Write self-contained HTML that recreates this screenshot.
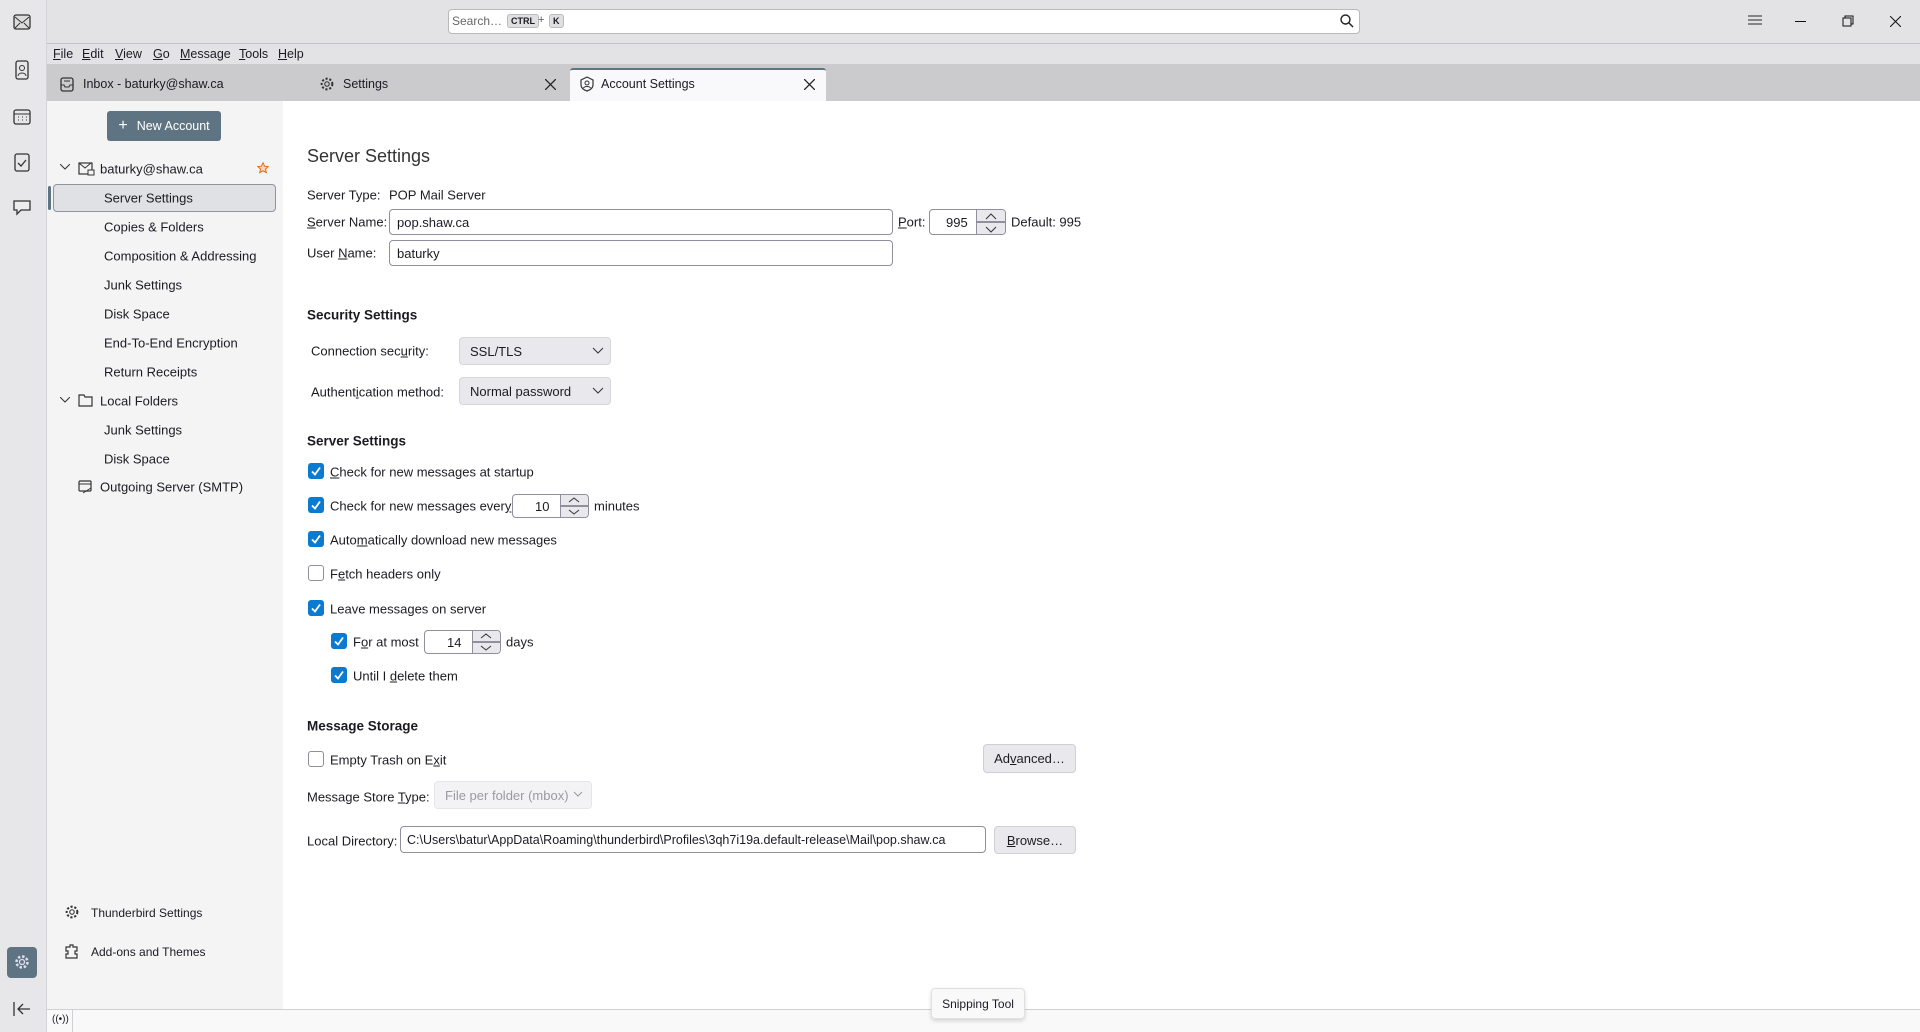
<!DOCTYPE html>
<html><head><meta charset="utf-8"><style>
*{box-sizing:border-box;margin:0;padding:0}
body{width:1920px;height:1032px;overflow:hidden;background:#fff;font-family:"Liberation Sans",sans-serif;font-size:13px;color:#1c1b22;position:relative}
.a{position:absolute;white-space:nowrap}
.inp{position:absolute;border:1px solid #8f8f9d;border-radius:4px;background:#fff;padding-left:7px;display:flex;align-items:center}
.sel{position:absolute;background:#e9e9ed;border:1px solid #d6d6da;border-radius:4px;padding-left:10px;display:flex;align-items:center}
.cb{position:absolute;width:16px;height:16px;border-radius:3px;background:#0a7bd0}
.cb.off{background:#fff;border:1px solid #8f8f9d}
.lbl{position:absolute;white-space:nowrap;transform:translateY(-50%)}
.btn{position:absolute;background:#e9e9ed;border:1px solid #cfcfd8;border-radius:4px;display:flex;align-items:center;justify-content:center}
u{text-decoration:underline}
</style></head><body>
<!-- spaces bar -->
<div class="a" style="left:0;top:0;width:47px;height:1032px;background:#e7e7ea;border-right:1px solid #d4d4d8"></div>
<!-- title bar -->
<div class="a" style="left:47px;top:0;width:1873px;height:64px;background:#e3e3e6;border-top:0"></div>
<div class="a" style="left:47px;top:43px;width:1873px;height:1px;background:#c4c4c8"></div>
<div class="a" style="left:448px;top:9px;width:912px;height:25px;background:#fff;border:1px solid #b8b8bd;border-radius:4px"></div>
<div class="a" style="left:452px;top:14px;color:#666;font-size:12px">Search…</div>
<div class="a" style="left:507px;top:14px;font-size:9px;background:#e0e0e3;border:1px solid #bbb;border-radius:3px;padding:1px 3px;font-weight:bold">CTRL</div>
<div class="a" style="left:538px;top:14px;font-size:11px;color:#555">+</div>
<div class="a" style="left:549px;top:14px;font-size:9px;background:#e0e0e3;border:1px solid #bbb;border-radius:3px;padding:1px 3px;font-weight:bold">K</div>
<svg class="a" style="left:1339px;top:13px" width="16" height="16" viewBox="0 0 16 16"><circle cx="6.5" cy="6.5" r="4.5" fill="none" stroke="#222" stroke-width="1.4"/><path d="M10 10l4 4" stroke="#222" stroke-width="1.5"/></svg>
<svg class="a" style="left:1748px;top:14px" width="14" height="12"><path d="M0 2h14M0 6h14M0 10h14" stroke="#666" stroke-width="1.5"/></svg>
<div class="a" style="left:1795px;top:21px;width:11px;height:1px;background:#111"></div>
<svg class="a" style="left:1842px;top:15px" width="12" height="12"><rect x="1" y="3" width="8" height="8" fill="none" stroke="#111"/><path d="M3 3V1h8v8H9" fill="none" stroke="#111"/></svg>
<svg class="a" style="left:1890px;top:16px" width="11" height="11"><path d="M0 0l11 11M11 0L0 11" stroke="#111"/></svg>
<!-- left icons -->
<svg class="a" style="left:13px;top:14px" width="18" height="16"><rect x="1" y="1" width="16" height="14" rx="2" fill="#ddd" stroke="#333" stroke-width="1.3"/><path d="M2 3l7 6 7-6M2 14l5-5M16 14l-5-5" stroke="#333" fill="none"/></svg>
<svg class="a" style="left:14px;top:60px" width="16" height="20"><rect x="2" y="1" width="12" height="18" rx="2" fill="none" stroke="#333" stroke-width="1.3"/><circle cx="8" cy="8" r="2.5" fill="none" stroke="#333"/><path d="M4 16c0-4 8-4 8 0" fill="none" stroke="#333"/></svg>
<svg class="a" style="left:13px;top:108px" width="18" height="17"><rect x="1" y="2" width="16" height="14" rx="2" fill="none" stroke="#333" stroke-width="1.3"/><path d="M1 6h16M5 9h1M9 9h1M13 9h1M5 12h1M9 12h1M13 12h1" stroke="#333"/></svg>
<svg class="a" style="left:14px;top:152px" width="16" height="20"><rect x="1" y="2" width="14" height="17" rx="2" fill="none" stroke="#333" stroke-width="1.3"/><path d="M4 11l3 3 5-6" fill="none" stroke="#333" stroke-width="1.3"/></svg>
<svg class="a" style="left:12px;top:199px" width="20" height="18"><path d="M2 2h16v9H9l-4 4v-4H2z" fill="#eee" stroke="#333" stroke-width="1.3"/></svg>
<div class="a" style="left:7px;top:947px;width:30px;height:31px;background:#5f7482;border-radius:4px"></div>
<svg class="a" style="left:13px;top:953px" width="18" height="18" viewBox="0 0 18 18"><circle cx="9" cy="9" r="5.5" fill="none" stroke="#dde" stroke-width="2.5" stroke-dasharray="2.5 1.8"/><circle cx="9" cy="9" r="2.5" fill="none" stroke="#dde" stroke-width="1.3"/></svg>
<svg class="a" style="left:13px;top:1002px" width="18" height="14"><path d="M1 0v14M17 7H5M10 2L5 7l5 5" stroke="#333" fill="none" stroke-width="1.3"/></svg>
<!-- menu -->
<div class="a" style="left:53px;top:47px;font-size:12.5px"><u>F</u>ile</div>
<div class="a" style="left:82px;top:47px;font-size:12.5px"><u>E</u>dit</div>
<div class="a" style="left:115px;top:47px;font-size:12.5px"><u>V</u>iew</div>
<div class="a" style="left:153px;top:47px;font-size:12.5px"><u>G</u>o</div>
<div class="a" style="left:180px;top:47px;font-size:12.5px"><u>M</u>essage</div>
<div class="a" style="left:239px;top:47px;font-size:12.5px"><u>T</u>ools</div>
<div class="a" style="left:278px;top:47px;font-size:12.5px"><u>H</u>elp</div>
<!-- tabs -->
<div class="a" style="left:47px;top:64px;width:1873px;height:37px;background:#cbcbcd"></div>
<div class="a" style="left:570px;top:68px;width:256px;height:33px;background:#f9f9fb;border-top:2px solid #5f7482;border-radius:3px 3px 0 0"></div>
<svg class="a" style="left:60px;top:77px" width="14" height="15"><rect x="1" y="1" width="12" height="13" rx="2" fill="none" stroke="#333" stroke-width="1.3"/><path d="M1 8h3l1 2h4l1-2h3M4 4h6" stroke="#333" fill="none"/></svg>
<div class="a" style="left:83px;top:77px;font-size:12.5px">Inbox - baturky@shaw.ca</div>
<svg class="a" style="left:319px;top:76px" width="16" height="16" viewBox="0 0 18 18"><circle cx="9" cy="9" r="6" fill="none" stroke="#333" stroke-width="2.3" stroke-dasharray="2.4 2"/><circle cx="9" cy="9" r="2.5" fill="none" stroke="#333" stroke-width="1.2"/></svg>
<div class="a" style="left:343px;top:77px;font-size:12.5px">Settings</div>
<svg class="a" style="left:545px;top:79px" width="11" height="11"><path d="M0 0l11 11M11 0L0 11" stroke="#222" stroke-width="1.3"/></svg>
<svg class="a" style="left:580px;top:76px" width="14" height="16"><path d="M7 1l6 3v5c0 3-3 5-6 6-3-1-6-3-6-6V4z" fill="none" stroke="#333" stroke-width="1.2"/><circle cx="7" cy="7" r="2" fill="none" stroke="#333"/><path d="M3.5 12c1-2 6-2 7 0" fill="none" stroke="#333"/></svg>
<div class="a" style="left:601px;top:77px;font-size:12.5px">Account Settings</div>
<svg class="a" style="left:804px;top:79px" width="11" height="11"><path d="M0 0l11 11M11 0L0 11" stroke="#222" stroke-width="1.3"/></svg>
<!-- sidebar -->
<div class="a" style="left:47px;top:101px;width:236px;height:909px;background:#f4f4f5"></div>
<div class="a" style="left:107px;top:111px;width:114px;height:30px;background:#5f7482;border-radius:3px;color:#fff;display:flex;align-items:center;justify-content:center;font-size:12.5px"><span style="font-size:16px;margin-right:9px">+</span>New Account</div>
<svg class="a" style="left:60px;top:164px" width="10" height="7"><path d="M0 0l5 5 5-5" stroke="#333" fill="none"/></svg>
<svg class="a" style="left:78px;top:162px" width="17" height="14"><rect x="1" y="1" width="13" height="11" fill="none" stroke="#333" stroke-width="1.2"/><path d="M1 1l6 5 6-5" stroke="#333" fill="none"/><rect x="10" y="8" width="6" height="5" fill="#f4f4f5" stroke="#333"/></svg>
<div class="lbl" style="left:100px;top:169px">baturky@shaw.ca</div>
<svg class="a" style="left:257px;top:162px" width="12" height="12" viewBox="0 0 12 12"><path d="M6 .8l1.6 3.4 3.6.4-2.7 2.4.8 3.6L6 8.8 2.7 10.6l.8-3.6L.8 4.6l3.6-.4z" fill="#fbd4b4" stroke="#e66a18"/></svg>
<div class="a" style="left:48px;top:186px;width:3px;height:24px;background:#5f7482;border-radius:2px"></div>
<div class="a" style="left:53px;top:184px;width:223px;height:28px;background:#e0e1e5;border:1px solid #8e959c;border-radius:4px"></div>
<div class="lbl" style="left:104px;top:198px">Server Settings</div>
<div class="lbl" style="left:104px;top:227px">Copies &amp; Folders</div>
<div class="lbl" style="left:104px;top:256px">Composition &amp; Addressing</div>
<div class="lbl" style="left:104px;top:285px">Junk Settings</div>
<div class="lbl" style="left:104px;top:314px">Disk Space</div>
<div class="lbl" style="left:104px;top:343px">End-To-End Encryption</div>
<div class="lbl" style="left:104px;top:372px">Return Receipts</div>
<svg class="a" style="left:60px;top:397px" width="10" height="7"><path d="M0 0l5 5 5-5" stroke="#333" fill="none"/></svg>
<svg class="a" style="left:78px;top:394px" width="15" height="13"><path d="M1 1h5l1 2h7v9H1z" fill="none" stroke="#333" stroke-width="1.2"/></svg>
<div class="lbl" style="left:100px;top:401px">Local Folders</div>
<div class="lbl" style="left:104px;top:430px">Junk Settings</div>
<div class="lbl" style="left:104px;top:459px">Disk Space</div>
<svg class="a" style="left:78px;top:480px" width="15" height="14"><rect x="1" y="1" width="12" height="10" rx="1" fill="none" stroke="#333" stroke-width="1.2"/><path d="M1 4h12M5 13l8-5" stroke="#333"/></svg>
<div class="lbl" style="left:100px;top:487px">Outgoing Server (SMTP)</div>
<svg class="a" style="left:64px;top:904px" width="16" height="16" viewBox="0 0 18 18"><circle cx="9" cy="9" r="6" fill="none" stroke="#333" stroke-width="2.3" stroke-dasharray="2.4 2"/><circle cx="9" cy="9" r="2.5" fill="none" stroke="#333" stroke-width="1.2"/></svg>
<div class="lbl" style="left:91px;top:913px;font-size:12px">Thunderbird Settings</div>
<svg class="a" style="left:64px;top:943px" width="16" height="16"><path d="M2 4h4V2h3v2h4v4h-2v3h2v4H2v-4h2V8H2z" fill="none" stroke="#333" stroke-width="1.2"/></svg>
<div class="lbl" style="left:91px;top:952px;font-size:12px">Add-ons and Themes</div>
<!-- status bar -->
<div class="a" style="left:47px;top:1009px;width:1873px;height:23px;background:#f9f9fa;border-top:1px solid #d0d0d4"></div>
<div class="a" style="left:72px;top:1010px;width:1px;height:22px;background:#d0d0d4"></div>
<div class="a" style="left:52px;top:1014px;font-size:10px">((•))</div>
<!-- content -->
<div class="a" style="left:307px;top:146px;font-size:18px;color:#333">Server Settings</div>
<div class="lbl" style="left:307px;top:195px">Server Type:</div>
<div class="lbl" style="left:389px;top:195px">POP Mail Server</div>
<div class="lbl" style="left:307px;top:222px"><u>S</u>erver Name:</div>
<div class="inp" style="left:389px;top:209px;width:504px;height:26px">pop.shaw.ca</div>
<div class="lbl" style="left:898px;top:222px"><u>P</u>ort:</div>
<div class="inp" style="left:929px;top:209px;width:77px;height:26px;padding-left:16px">995</div>
<div class="a" style="left:976px;top:210px;width:29px;height:24px;background:#e9e9ed;border-left:1px solid #8f8f9d;border-radius:0 3px 3px 0"></div>
<div class="a" style="left:977px;top:221px;width:28px;height:2px;background:#8f8f9d"></div>
<svg class="a" style="left:985px;top:213px" width="12" height="20"><path d="M1 6l5-5 5 5M1 14l5 5 5-5" stroke="#333" fill="none"/></svg>
<div class="lbl" style="left:1011px;top:222px">Default: 995</div>
<div class="lbl" style="left:307px;top:253px">User <u>N</u>ame:</div>
<div class="inp" style="left:389px;top:240px;width:504px;height:26px">baturky</div>
<div class="lbl" style="left:307px;top:315px;font-weight:bold;font-size:13.5px">Security Settings</div>
<div class="lbl" style="left:311px;top:351px">Connection sec<u>u</u>rity:</div>
<div class="sel" style="left:459px;top:337px;width:152px;height:28px">SSL/TLS</div>
<svg class="a" style="left:592px;top:347px" width="12" height="8"><path d="M1 1l5 5 5-5" stroke="#333" fill="none"/></svg>
<div class="lbl" style="left:311px;top:392px">Authent<u>i</u>cation method:</div>
<div class="sel" style="left:459px;top:377px;width:152px;height:28px">Normal password</div>
<svg class="a" style="left:592px;top:387px" width="12" height="8"><path d="M1 1l5 5 5-5" stroke="#333" fill="none"/></svg>
<div class="lbl" style="left:307px;top:441px;font-weight:bold;font-size:13.5px">Server Settings</div>
<!-- checkboxes -->
<svg width="0" height="0" style="position:absolute"><defs></defs></svg>
<div class="cb" style="left:308px;top:463px"></div><svg class="a" style="left:308px;top:463px" width="16" height="16"><path d="M4 8.5l3 3 5-7" stroke="#fff" stroke-width="1.8" fill="none"/></svg>
<div class="lbl" style="left:330px;top:472px"><u>C</u>heck for new messages at startup</div>
<div class="cb" style="left:308px;top:497px"></div><svg class="a" style="left:308px;top:497px" width="16" height="16"><path d="M4 8.5l3 3 5-7" stroke="#fff" stroke-width="1.8" fill="none"/></svg>
<div class="lbl" style="left:330px;top:506px">Check for new messages ever<u>y</u></div>
<div class="inp" style="left:512px;top:494px;width:77px;height:24px;padding-left:22px">10</div>
<div class="a" style="left:560px;top:495px;width:28px;height:22px;background:#e9e9ed;border-left:1px solid #8f8f9d;border-radius:0 3px 3px 0"></div>
<div class="a" style="left:561px;top:505px;width:27px;height:2px;background:#8f8f9d"></div>
<svg class="a" style="left:568px;top:497px" width="12" height="18"><path d="M1 5l5-4 5 4M1 13l5 4 5-4" stroke="#333" fill="none"/></svg>
<div class="lbl" style="left:594px;top:506px">minutes</div>
<div class="cb" style="left:308px;top:531px"></div><svg class="a" style="left:308px;top:531px" width="16" height="16"><path d="M4 8.5l3 3 5-7" stroke="#fff" stroke-width="1.8" fill="none"/></svg>
<div class="lbl" style="left:330px;top:540px">Auto<u>m</u>atically download new messages</div>
<div class="cb off" style="left:308px;top:565px"></div>
<div class="lbl" style="left:330px;top:574px">F<u>e</u>tch headers only</div>
<div class="cb" style="left:308px;top:600px"></div><svg class="a" style="left:308px;top:600px" width="16" height="16"><path d="M4 8.5l3 3 5-7" stroke="#fff" stroke-width="1.8" fill="none"/></svg>
<div class="lbl" style="left:330px;top:609px">Leave messa<u>g</u>es on server</div>
<div class="cb" style="left:331px;top:633px"></div><svg class="a" style="left:331px;top:633px" width="16" height="16"><path d="M4 8.5l3 3 5-7" stroke="#fff" stroke-width="1.8" fill="none"/></svg>
<div class="lbl" style="left:353px;top:642px">F<u>o</u>r at most</div>
<div class="inp" style="left:424px;top:630px;width:77px;height:24px;padding-left:22px">14</div>
<div class="a" style="left:472px;top:631px;width:28px;height:22px;background:#e9e9ed;border-left:1px solid #8f8f9d;border-radius:0 3px 3px 0"></div>
<div class="a" style="left:473px;top:641px;width:27px;height:2px;background:#8f8f9d"></div>
<svg class="a" style="left:480px;top:633px" width="12" height="18"><path d="M1 5l5-4 5 4M1 13l5 4 5-4" stroke="#333" fill="none"/></svg>
<div class="lbl" style="left:506px;top:642px">days</div>
<div class="cb" style="left:331px;top:667px"></div><svg class="a" style="left:331px;top:667px" width="16" height="16"><path d="M4 8.5l3 3 5-7" stroke="#fff" stroke-width="1.8" fill="none"/></svg>
<div class="lbl" style="left:353px;top:676px">Until I <u>d</u>elete them</div>
<div class="lbl" style="left:307px;top:726px;font-weight:bold;font-size:13.5px">Message Storage</div>
<div class="cb off" style="left:308px;top:751px"></div>
<div class="lbl" style="left:330px;top:760px">Empty Trash on E<u>x</u>it</div>
<div class="btn" style="left:983px;top:744px;width:93px;height:29px">Ad<u>v</u>anced…</div>
<div class="lbl" style="left:307px;top:797px">Message Store <u>T</u>ype:</div>
<div class="sel" style="left:434px;top:781px;width:158px;height:28px;background:#f3f3f5;border-color:#e6e6ea;color:#9a9aa0;padding-left:10px">File per folder (mbox)</div>
<svg class="a" style="left:573px;top:791px" width="10" height="7"><path d="M1 1l4 4 4-4" stroke="#999" fill="none"/></svg>
<div class="lbl" style="left:307px;top:841px">Local Directory:</div>
<div class="inp" style="left:400px;top:826px;width:586px;height:27px;padding-left:6px;font-size:12.5px">C:\Users\batur\AppData\Roaming\thunderbird\Profiles\3qh7i19a.default-release\Mail\pop.shaw.ca</div>
<div class="btn" style="left:994px;top:826px;width:82px;height:28px"><u>B</u>rowse…</div>
<!-- tooltip -->
<div class="a" style="left:931px;top:988px;width:94px;height:31px;background:#f9f9f9;border:1px solid #e0e0e0;border-radius:4px;box-shadow:0 2px 4px rgba(0,0,0,.15);font-size:12px;display:flex;align-items:center;justify-content:center">Snipping Tool</div>
</body></html>
